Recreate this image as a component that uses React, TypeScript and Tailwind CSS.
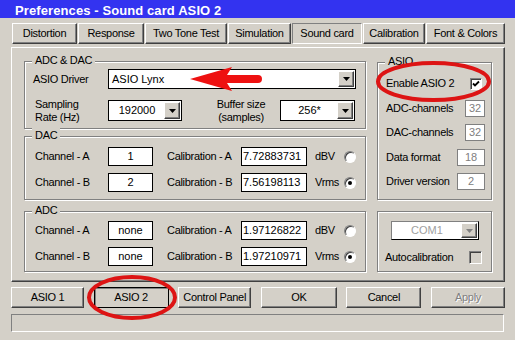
import type {ReactNode} from "react";

const raised =
    "border border-t-white border-l-white border-r-[#404040] border-b-[#404040] shadow-[inset_-1px_-1px_0_#808080]";
const sunken = "border border-t-[#808080] border-l-[#808080] border-r-white border-b-white";

function Group({label, className, children}: {label?: string; className: string; children: ReactNode}) {
    return (
        <div className={`relative border border-[#808080] shadow-[inset_1px_1px_0_#fff,1px_1px_0_#fff] ${className}`}>
            {label && (
                <span className="absolute -top-[9px] left-[7px] bg-[#d4d0c8] px-[3px] leading-[14px]">{label}</span>
            )}
            {children}
        </div>
    );
}

function DropButton({disabled}: {disabled?: boolean}) {
    return (
        <div className={`flex h-full w-[16px] shrink-0 items-center justify-center bg-[#d4d0c8] ${raised}`}>
            <svg width="7" height="4" viewBox="0 0 7 4">
                <path d="M0 0h7L3.5 4z" fill={disabled ? "#808080" : "#000"} />
            </svg>
        </div>
    );
}

function Combo({value, className, center}: {value: string; className: string; center?: boolean}) {
    return (
        <div className={`flex items-center bg-white border border-black p-px ${className}`}>
            <div className={`flex-1 tracking-normal ${center ? "text-center" : "pl-[2px]"}`}>{value}</div>
            <DropButton />
        </div>
    );
}

function Radio({checked}: {checked?: boolean}) {
    return (
        <div className="flex h-[12px] w-[12px] shrink-0 items-center justify-center rounded-full border border-t-[#808080] border-l-[#808080] border-r-white border-b-white bg-white shadow-[inset_1px_1px_0_#404040]">
            {checked && <div className="h-[4px] w-[4px] rounded-full bg-black" />}
        </div>
    );
}

function Check({checked, className}: {checked?: boolean; className: string}) {
    return (
        <div className={`flex items-center justify-center ${sunken} shadow-[inset_1px_1px_0_#404040] ${className}`}>
            {checked && (
                <svg width="8" height="8" viewBox="0 0 8 8">
                    <path d="M1 3.5l2 2L7 1.5" stroke="#000" strokeWidth="1.8" fill="none" />
                </svg>
            )}
        </div>
    );
}

function ChannelRow({channel, route, cal, unit, checked}: {channel: string; route: string; cal: string; unit: string; checked?: boolean}) {
    return (
        <div className="flex h-[19px] items-center">
            <div className="w-[73px]">Channel - {channel}</div>
            <div className="flex h-full w-[45px] items-center justify-center border border-black bg-white tracking-normal">
                {route}
            </div>
            <div className="ml-[14px] w-[74px]">Calibration - {channel}</div>
            <div className="flex h-full w-[66px] items-center border border-black bg-white pl-px tracking-normal">
                {cal}
            </div>
            <div className="ml-[8px] w-[29px]">{unit}</div>
            <Radio checked={checked} />
        </div>
    );
}

function InfoRow({label, value, wide}: {label: string; value: string; wide?: boolean}) {
    return (
        <div className="flex h-[17px] items-center justify-between">
            <span>{label}</span>
            <div
                className={`flex h-full items-center justify-center border border-[#808080] bg-white text-[#808080] tracking-normal ${wide ? "w-[28px]" : "w-[20px]"}`}
            >
                {value}
            </div>
        </div>
    );
}

const tabs = [
    {name: "Distortion", w: "w-[65px]"},
    {name: "Response", w: "w-[66px]"},
    {name: "Two Tone Test", w: "w-[82px]"},
    {name: "Simulation", w: "w-[63px]"},
    {name: "Sound card", w: "w-[70px]", active: true},
    {name: "Calibration", w: "w-[62px]"},
    {name: "Font & Colors", w: "w-[79px]"},
];

const buttons = [
    {name: "ASIO 1", w: "w-[73px]"},
    {name: "ASIO 2", w: "w-[75px]", pressed: true},
    {name: "Control Panel", w: "w-[73px]"},
    {name: "OK", w: "w-[76px]"},
    {name: "Cancel", w: "w-[75px]"},
    {name: "Apply", w: "w-[74px]", disabled: true},
];

export default function App() {
    return (
        <div className="relative h-[340px] w-[515px] overflow-hidden bg-[#d4d0c8] font-['Liberation_Sans',Arial,sans-serif] text-[11px] leading-[13px] tracking-[-0.3px] text-black">
            <div className="flex h-[18px] items-center bg-[#3333f0] pl-[15px] pt-[3px] text-[13px] font-bold tracking-[0.1px] text-white">
                Preferences - Sound card ASIO 2
            </div>

            <div className="ml-[12px] mt-[5px] flex h-[21px] gap-px">
                {tabs.map((tab) => (
                    <div
                        key={tab.name}
                        className={`flex items-center justify-center ${tab.w} ${
                            tab.active
                                ? "border border-t-[#808080] border-l-[#808080] border-r-white border-b-white"
                                : raised
                        }`}
                    >
                        {tab.name}
                    </div>
                ))}
            </div>

            <div className={`ml-[11px] mt-[3px] flex h-[235px] w-[494px] gap-[11px] pl-[12px] pt-[13px] ${raised}`}>
                <div className="flex w-[342px] flex-col">
                    <Group label="ADC & DAC" className="h-[68px] pl-[8px] pt-[7px]">
                        <div className="flex h-[20px] items-center">
                            <div className="w-[75px]">ASIO Driver</div>
                            <Combo value="ASIO Lynx" className="h-full w-[248px]" />
                        </div>
                        <div className="mt-[11px] flex h-[21px] items-center">
                            <div className="w-[75px] pl-[2px]">
                                Sampling
                                <br />
                                Rate (Hz)
                            </div>
                            <Combo value="192000" className="h-full w-[74px]" center />
                            <div className="ml-[33px] w-[52px] text-center">
                                Buffer size
                                <br />
                                (samples)
                            </div>
                            <Combo value="256*" className="ml-[13px] h-full w-[75px]" center />
                        </div>
                    </Group>

                    <Group label="DAC" className="mt-[7px] flex h-[64px] flex-col gap-[7px] pl-[10px] pt-[10px]">
                        <ChannelRow channel="A" route="1" cal="7.72883731" unit="dBV" />
                        <ChannelRow channel="B" route="2" cal="7.56198113" unit="Vrms" checked />
                    </Group>

                    <Group label="ADC" className="mt-[11px] flex h-[61px] flex-col gap-[7px] pl-[10px] pt-[9px]">
                        <ChannelRow channel="A" route="none" cal="1.97126822" unit="dBV" />
                        <ChannelRow channel="B" route="none" cal="1.97210971" unit="Vrms" checked />
                    </Group>
                </div>

                <div className="flex w-[115px] flex-col">
                    <Group label="ASIO" className="mt-px flex h-[138px] flex-col gap-[7.5px] pl-[8px] pr-[6px] pt-[12px]">
                        <div className="flex h-[17px] items-center justify-between">
                            <span>Enable ASIO 2</span>
                            <Check checked className="mr-[3px] h-[12px] w-[12px] bg-white" />
                        </div>
                        <InfoRow label="ADC-channels" value="32" />
                        <InfoRow label="DAC-channels" value="32" />
                        <InfoRow label="Data format" value="18" wide />
                        <InfoRow label="Driver version" value="2" wide />
                    </Group>

                    <Group className="mt-[11px] h-[61px] pl-[7px] pr-[9px] pt-[9px]">
                        <div className="ml-[6px] flex h-[19px] w-[88px] items-center border border-[#808080] border-r-black border-b-black bg-white p-px">
                            <div className="flex-1 text-center tracking-normal text-[#a0a0a0]">COM1</div>
                            <DropButton disabled />
                        </div>
                        <div className="mt-[11px] flex h-[13px] items-center justify-between">
                            <span>Autocalibration</span>
                            <Check className="h-[13px] w-[13px] bg-[#d4d0c8]" />
                        </div>
                    </Group>
                </div>
            </div>

            <div className="ml-[11px] mt-[5px] flex h-[21px] w-[494px] justify-between">
                {buttons.map((b) => (
                    <div
                        key={b.name}
                        className={`flex items-center justify-center ${b.w} ${
                            b.pressed ? "border border-black shadow-[inset_1px_1px_0_#808080]" : raised
                        } ${b.disabled ? "text-[#808080] [text-shadow:1px_1px_0_#fff]" : ""}`}
                    >
                        {b.name}
                    </div>
                ))}
            </div>

            <div className={`ml-[11px] mt-[6px] h-[18px] w-[493px] ${sunken}`} />

            <svg className="pointer-events-none absolute left-0 top-0" width="515" height="340" viewBox="0 0 515 340">
                <path d="M190 79L232 67L227 75H258A4 4 0 0 1 258 83H227L232 91Z" fill="#ee1111" />
                <ellipse cx="433.5" cy="81.5" rx="55.5" ry="18.5" fill="none" stroke="#dd1414" strokeWidth="4" />
                <ellipse cx="132" cy="297.5" rx="43" ry="20.5" fill="none" stroke="#dd1414" strokeWidth="4" />
            </svg>
        </div>
    );
}
